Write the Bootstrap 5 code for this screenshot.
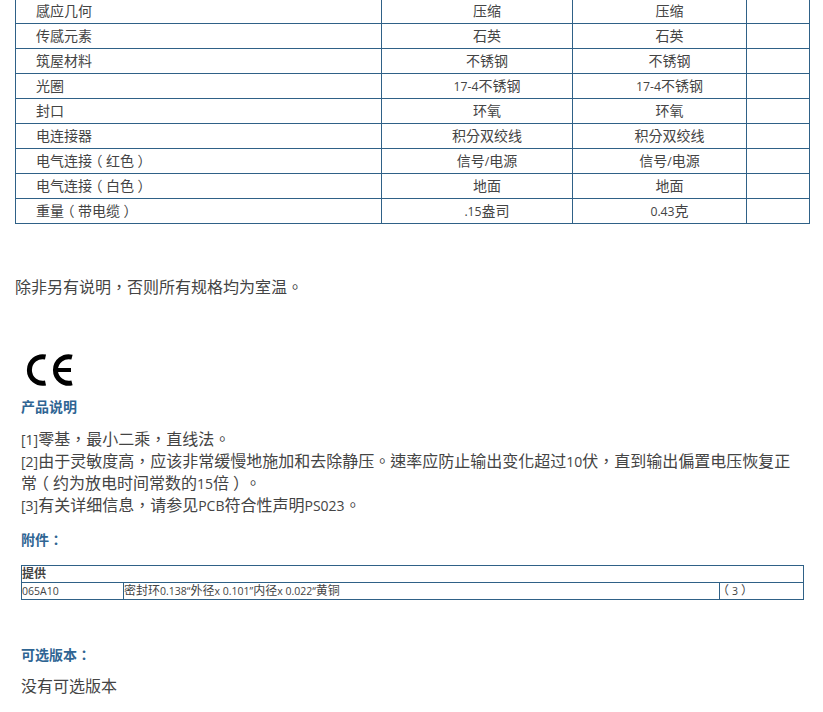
<!DOCTYPE html>
<html lang="zh-TW">
<head>
<meta charset="utf-8">
<title>规格</title>
<link rel="stylesheet" href="https://cdn.jsdelivr.net/npm/bootstrap@5.3.0/dist/css/bootstrap.min.css">
<style>
body{font-family:"Open Sans","Noto Sans CJK TC",sans-serif;color:#444;background:#fff;font-size:16px;overflow:hidden}
.lat{font-size:.875em;line-height:1}
.par-l{display:inline-block;line-height:1;transform:translateX(-.25em)}
.par-r{display:inline-block;line-height:1;transform:translateX(.25em)}
.spec-wrap{padding:0 14px 0 15px;margin-top:-2px}
.spec-table{width:794px;table-layout:fixed;border-collapse:collapse;font-size:14px;margin:0}
.spec-table td{border:1px solid #2f6187;height:25px;padding:0 0 0 20px;vertical-align:middle;line-height:1;color:#444}
.spec-note{font-size:16px;line-height:22px;margin:52px 0 0}
.info-block{padding-left:6px;padding-right:5px}
.ce-mark{display:block;margin:56px 0 0 5px}
.blue-head{color:#2f6593;font-weight:700;font-size:14px;line-height:20px;margin:0}
.ce-head{margin-top:11px}
.note-list{font-size:16px;line-height:22px;margin:11px 0 0}
.acc-head{margin-top:14px;margin-bottom:15px}
.acc-table{width:782px;table-layout:fixed;border-collapse:collapse;font-size:12px;margin:0}
.acc-table td{border:1px solid #2f6187;height:17px;padding:0;line-height:1;color:#444;vertical-align:middle}
.opt-head{margin-top:45px}
.none-note{font-size:16px;line-height:22px;margin:10px 0 0}
</style>
</head>
<body>
<div class="spec-wrap">
<table class="spec-table">
<colgroup><col style="width:366px"><col style="width:191px"><col style="width:174px"><col style="width:63px"></colgroup>
<tbody>
<tr><td>感应几何</td><td class="text-center">压缩</td><td class="text-center">压缩</td><td></td></tr>
<tr><td>传感元素</td><td class="text-center">石英</td><td class="text-center">石英</td><td></td></tr>
<tr><td>筑屋材料</td><td class="text-center">不锈钢</td><td class="text-center">不锈钢</td><td></td></tr>
<tr><td>光圈</td><td class="text-center"><span class="lat">17-4</span>不锈钢</td><td class="text-center"><span class="lat">17-4</span>不锈钢</td><td></td></tr>
<tr><td>封口</td><td class="text-center">环氧</td><td class="text-center">环氧</td><td></td></tr>
<tr><td>电连接器</td><td class="text-center">积分双绞线</td><td class="text-center">积分双绞线</td><td></td></tr>
<tr><td>电气连接<span class="par-l">（</span>红色<span class="par-r">）</span></td><td class="text-center">信号<span class="lat">/</span>电源</td><td class="text-center">信号<span class="lat">/</span>电源</td><td></td></tr>
<tr><td>电气连接<span class="par-l">（</span>白色<span class="par-r">）</span></td><td class="text-center">地面</td><td class="text-center">地面</td><td></td></tr>
<tr><td>重量<span class="par-l">（</span>带电缆<span class="par-r">）</span></td><td class="text-center"><span class="lat">.15</span>盎司</td><td class="text-center"><span class="lat">0.43</span>克</td><td></td></tr>
</tbody>
</table>
<p class="spec-note">除非另有说明，否则所有规格均为室温。</p>
<div class="info-block">
<svg class="ce-mark" width="48" height="32" viewBox="0 0 48 32" role="img" aria-label="CE">
<path d="M19.500 3A13.300 13.300 0 1 0 19.500 29" fill="none" stroke="#000" stroke-width="5"/>
<path d="M46 3.100A13.300 13.300 0 1 0 46 28.900" fill="none" stroke="#000" stroke-width="5"/>
<path d="M31 16H45" fill="none" stroke="#000" stroke-width="4"/>
</svg>
<p class="blue-head ce-head">产品说明</p>
<p class="note-list"><span class="lat">[1]</span>零基，最小二乘，直线法。<br><span class="lat">[2]</span>由于灵敏度高，应该非常缓慢地施加和去除静压。速率应防止输出变化超过<span class="lat">10</span>伏，直到输出偏置电压恢复正常<span class="par-l">（</span>约为放电时间常数的<span class="lat">15</span>倍<span class="par-r">）</span>。<br><span class="lat">[3]</span>有关详细信息，请参见<span class="lat">PCB</span>符合性声明<span class="lat">PS023</span>。</p>
<p class="blue-head acc-head">附件：</p>
<table class="acc-table">
<colgroup><col style="width:102px"><col style="width:596px"><col style="width:84px"></colgroup>
<tbody>
<tr><td colspan="3" class="fw-bold">提供</td></tr>
<tr><td><span class="lat">065A10</span></td><td>密封环<span class="lat">0.138“</span>外径<span class="lat">x 0.101”</span>内径<span class="lat">x 0.022“</span>黄铜</td><td><span class="par-l">（</span><span class="lat">3</span><span class="par-r">）</span></td></tr>
</tbody>
</table>
<p class="blue-head opt-head">可选版本：</p>
<p class="none-note">没有可选版本</p>
</div>
</div>
</body>
</html>
